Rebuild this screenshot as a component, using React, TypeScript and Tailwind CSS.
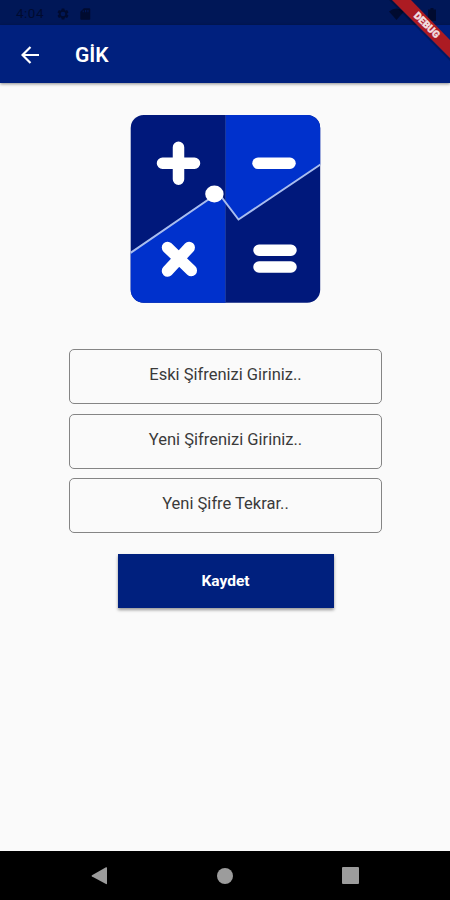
function StatusBar() {
  return (
    <div className="flex h-[25px] shrink-0 items-center bg-[#001757] pl-[16px] pt-[3px] text-[#000b30]">
      <span className="w-[40px] text-[13.500px] leading-none tracking-[0.5px]">4:04</span>
      <svg className="h-[14px] w-[14px]" viewBox="0 0 24 24" fill="currentColor">
        <path d="M19.14 12.94a7 7 0 0 0 0-1.88l2.03-1.58a.5.5 0 0 0 .12-.61l-1.92-3.32a.5.5 0 0 0-.59-.22l-2.39.96a7 7 0 0 0-1.62-.94l-.36-2.54a.5.5 0 0 0-.48-.41h-3.84a.5.5 0 0 0-.47.41l-.36 2.54a7 7 0 0 0-1.62.94l-2.39-.96a.5.5 0 0 0-.59.22L2.74 8.87a.5.5 0 0 0 .12.61l2.03 1.58a7 7 0 0 0 0 1.88l-2.03 1.58a.5.5 0 0 0-.12.61l1.92 3.32c.12.22.37.29.59.22l2.39-.96c.5.38 1.03.7 1.62.94l.36 2.54c.05.24.24.41.48.41h3.84c.24 0 .44-.17.47-.41l.36-2.54a7 7 0 0 0 1.62-.94l2.39.96c.22.08.47 0 .59-.22l1.92-3.32a.5.5 0 0 0-.12-.61zM12 16a4 4 0 1 1 0-8 4 4 0 0 1 0 8z" />
      </svg>
      <svg className="ml-[8px] h-[14px] w-[14px]" viewBox="0 0 24 24" fill="currentColor">
        <path d="M19 2h-9L4 8v12c0 1.100.9 2 2 2h13c1.100 0 2-.9 2-2V4c0-1.100-.9-2-2-2zM10 9H8V6h2zm4 0h-2V5h2zm4 0h-2V5h2z" />
      </svg>
      <svg className="ml-auto mr-[24px] h-[12px] w-[15px]" viewBox="0 0 15 12" fill="currentColor">
        <path d="M0 3.500Q7.500-2.500 15 3.500L7.500 12z" />
      </svg>
      <svg className="mr-[14px] h-[13px] w-[8px]" viewBox="0 0 8 13" fill="currentColor">
        <path d="M0 1.500h2.500V0h3v1.500H8V13H0z" />
      </svg>
    </div>
  );
}

function DebugRibbon() {
  return (
    <svg className="absolute right-0 top-0 h-[70px] w-[70px]" viewBox="380 0 70 70">
      <path d="M392 0L450 58V61L389 0Z" fill="#000" opacity=".22" />
      <path d="M392 0H411L450 40V58Z" fill="#ac1b22" />
      <text
        x="427"
        y="28.500"
        transform="rotate(45 427 25)"
        textAnchor="middle"
        fontFamily="Roboto, sans-serif"
        fontWeight="900"
        fontSize="10"
        fill="#f3dfe0"
        stroke="#f3dfe0"
        strokeWidth=".4"
      >
        DEBUG
      </text>
    </svg>
  );
}

function Logo() {
  return (
    <svg className="h-[190px] w-[192px]" viewBox="129 114 192 190">
      <defs>
        <clipPath id="tile">
          <rect x="130.700" y="115" width="189.500" height="187.700" rx="13" />
        </clipPath>
      </defs>
      <g clipPath="url(#tile)">
        <rect x="130" y="114" width="192" height="190" fill="#00187b" />
        <path d="M225.500 114H322V163.500L238.500 219.500L225.500 202Z" fill="#0031cc" />
        <path d="M130 253L214 195L225.500 202V304H130Z" fill="#0031cc" />
        <path d="M225.500 114V304" stroke="#28459c" strokeWidth=".8" opacity=".8" />
        <path d="M129 254L214.300 195.500L221 196.500L238.500 219.500L322 163.500" fill="none" stroke="#a9bdee" strokeWidth="2" />
      </g>
      <ellipse cx="214.400" cy="194" rx="9.200" ry="8.400" fill="#fff" />
      <g stroke="#fff" strokeWidth="11.500" strokeLinecap="round">
        <path d="M162.500 163.200H194.500M178.500 147.200V179.200" />
        <path d="M258 163.300H290" />
        <path d="M167.500 247.500L191.300 270.500M189.200 247.500L167.500 271" />
        <path d="M259 250.300H291M259 267H291" />
      </g>
    </svg>
  );
}

function Field({ label }: { label: string }) {
  return (
    <div className="h-[55px] w-[313px] rounded-[5px] border border-[#858585] pt-[14px] pl-[1px] text-center text-[16.500px] leading-[21px] text-[#3a3a3a]">
      {label}
    </div>
  );
}

export default function App() {
  return (
    <div className="relative flex h-[900px] w-[450px] flex-col overflow-hidden bg-[#fafafa] font-['Roboto',sans-serif]">
      <StatusBar />
      <header className="flex h-[58px] shrink-0 items-center bg-[#00207e] pl-[21px] pt-[2px] text-white shadow-[0_1px_3px_rgba(0,0,0,0.45)]">
        <svg className="h-[18px] w-[18px]" viewBox="0 0 18 18" fill="none" stroke="currentColor" strokeWidth="2.200">
          <path d="M18 9H2M9.500 1L1.500 9L9.500 17" />
        </svg>
        <h1 className="ml-[36px] pt-px text-[21px] leading-none font-semibold">GİK</h1>
      </header>
      <main className="flex flex-1 flex-col items-center pt-[31px]">
        <Logo />
        <div className="mt-[45px] flex flex-col gap-[9.500px]">
          <Field label="Eski Şifrenizi Giriniz.." />
          <Field label="Yeni Şifrenizi Giriniz.." />
          <Field label="Yeni Şifre Tekrar.." />
        </div>
        <button className="mt-[21px] ml-[1px] h-[54px] w-[216px] bg-[#00207e] pt-[2px] text-[15.500px] font-bold text-white shadow-[0_2px_3px_rgba(0,0,0,0.4)]">
          Kaydet
        </button>
      </main>
      <nav className="flex h-[49px] shrink-0 items-center justify-between bg-black pl-[91px] pr-[91px] text-[#9c9c9c]">
        <svg className="h-[18px] w-[17px]" viewBox="0 0 17 18" fill="currentColor">
          <path d="M1 8.200L15 .3Q16 0 16 1V16.500Q16 17.500 15 17L1 9.500Q0 8.900 1 8.200Z" />
        </svg>
        <div className="h-[16px] w-[16px] rounded-full bg-[#9c9c9c]" />
        <div className="h-[17px] w-[17px] rounded-[1px] bg-[#9c9c9c]" />
      </nav>
      <DebugRibbon />
    </div>
  );
}
